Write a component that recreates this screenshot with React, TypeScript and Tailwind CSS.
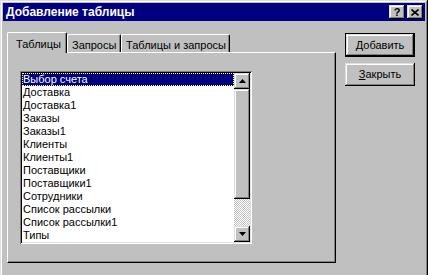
import React from "react";

const items = [
  "Выбор счета",
  "Доставка",
  "Доставка1",
  "Заказы",
  "Заказы1",
  "Клиенты",
  "Клиенты1",
  "Поставщики",
  "Поставщики1",
  "Сотрудники",
  "Список рассылки",
  "Список рассылки1",
  "Типы",
];

const raised =
  "bg-[#c0c0c0] shadow-[inset_-1px_-1px_#000,inset_1px_1px_#dfdfdf,inset_-2px_-2px_#808080,inset_2px_2px_#fff]";

function Arrow({ up }: { up?: boolean }) {
  return (
    <svg width="7" height="4" viewBox="0 0 7 4" className="block">
      {up ? <path d="M3.5 0 L7 4 L0 4 Z" fill="#000" /> : <path d="M0 0 L7 0 L3.5 4 Z" fill="#000" />}
    </svg>
  );
}

export default function App() {
  return (
    <div
      className={`w-[428px] h-[280px] p-[3px] ${raised} text-black`}
      style={{ fontFamily: '"Liberation Sans", Arial, sans-serif' }}
    >
      {/* title bar */}
      <div className="h-[18px] bg-[#000080] flex items-center justify-between pl-[3px] pr-[2px]">
        <span className="text-white font-bold text-[12px] leading-none">Добавление таблицы</span>
        <div className="flex gap-[2px]">
          <div className={`w-[16px] h-[14px] ${raised} flex items-center justify-center`}>
            <span className="font-bold text-[11px] leading-none">?</span>
          </div>
          <div className={`w-[16px] h-[14px] ${raised} flex items-center justify-center`}>
            <svg width="8" height="7" viewBox="0 0 8 7">
              <path d="M0.5 0.5 L7.5 6.5 M7.5 0.5 L0.5 6.5" stroke="#000" strokeWidth="1.6" />
            </svg>
          </div>
        </div>
      </div>

      {/* body */}
      <div className="flex pl-[4px] pt-[11px]">
        <div className="w-[329px]">
          {/* tabs */}
          <div className="flex items-end h-[20px] text-[11px]">
            <div className="relative z-10 h-[21px] -mb-[1px] w-[60px] bg-[#c0c0c0] border-l border-t border-white border-r border-r-black rounded-tl-[2px] rounded-tr-[2px] shadow-[inset_-1px_0_#808080] flex items-start pl-[8px] pt-[3px]">
              Таблицы
            </div>
            <div className="h-[18px] w-[54px] border-l border-t border-white border-r border-r-black rounded-tl-[2px] rounded-tr-[2px] shadow-[inset_-1px_0_#808080] flex items-start pl-[4px] pt-[2px]">
              Запросы
            </div>
            <div className="h-[18px] w-[109px] border-l border-t border-white border-r border-r-black rounded-tl-[2px] rounded-tr-[2px] shadow-[inset_-1px_0_#808080] flex items-start pl-[4px] pt-[2px]">
              Таблицы и запросы
            </div>
          </div>
          {/* panel */}
          <div className="h-[211px] border-l border-t border-white border-r border-b border-r-black border-b-black shadow-[inset_-1px_-1px_#808080] pl-[12px] pt-[18px]">
            <div className="w-[232px] h-[173px] p-[2px] bg-white shadow-[inset_1px_1px_#808080,inset_-1px_-1px_#fff,inset_2px_2px_#000,inset_-2px_-2px_#dfdfdf] flex">
              <div className="flex-1 overflow-hidden text-[11px]">
                {items.map((it, i) =>
                  i === 0 ? (
                    <div key={it} className="h-[13px] leading-[11px] bg-[#000080] text-white border border-dotted border-[#ffff80] pl-[0px]">
                      {it}
                    </div>
                  ) : (
                    <div key={it} className="h-[13px] leading-[13px] pl-[1px]">
                      {it}
                    </div>
                  )
                )}
              </div>
              <div className="w-[16px] flex flex-col">
                <div className={`h-[16px] ${raised} flex items-center justify-center`}>
                  <Arrow up />
                </div>
                <div className={`h-[110px] ${raised}`} />
                <div className="flex-1 bg-[repeating-conic-gradient(#c0c0c0_0%_25%,#ffffff_0%_50%)] bg-[length:2px_2px]" />
                <div className={`h-[16px] ${raised} flex items-center justify-center`}>
                  <Arrow />
                </div>
              </div>
            </div>
          </div>
        </div>

        {/* buttons */}
        <div className="ml-[9px] pt-[1px] flex flex-col gap-[6px] text-[11px]">
          <div className="w-[70px] h-[24px] border border-black">
            <div className={`w-full h-full ${raised} flex items-center justify-center`}>
              <span>
                <span className="underline">Д</span>обавить
              </span>
            </div>
          </div>
          <div className={`w-[70px] h-[23px] ${raised} flex items-center justify-center`}>
            <span>
              <span className="underline">З</span>акрыть
            </span>
          </div>
        </div>
      </div>
    </div>
  );
}
